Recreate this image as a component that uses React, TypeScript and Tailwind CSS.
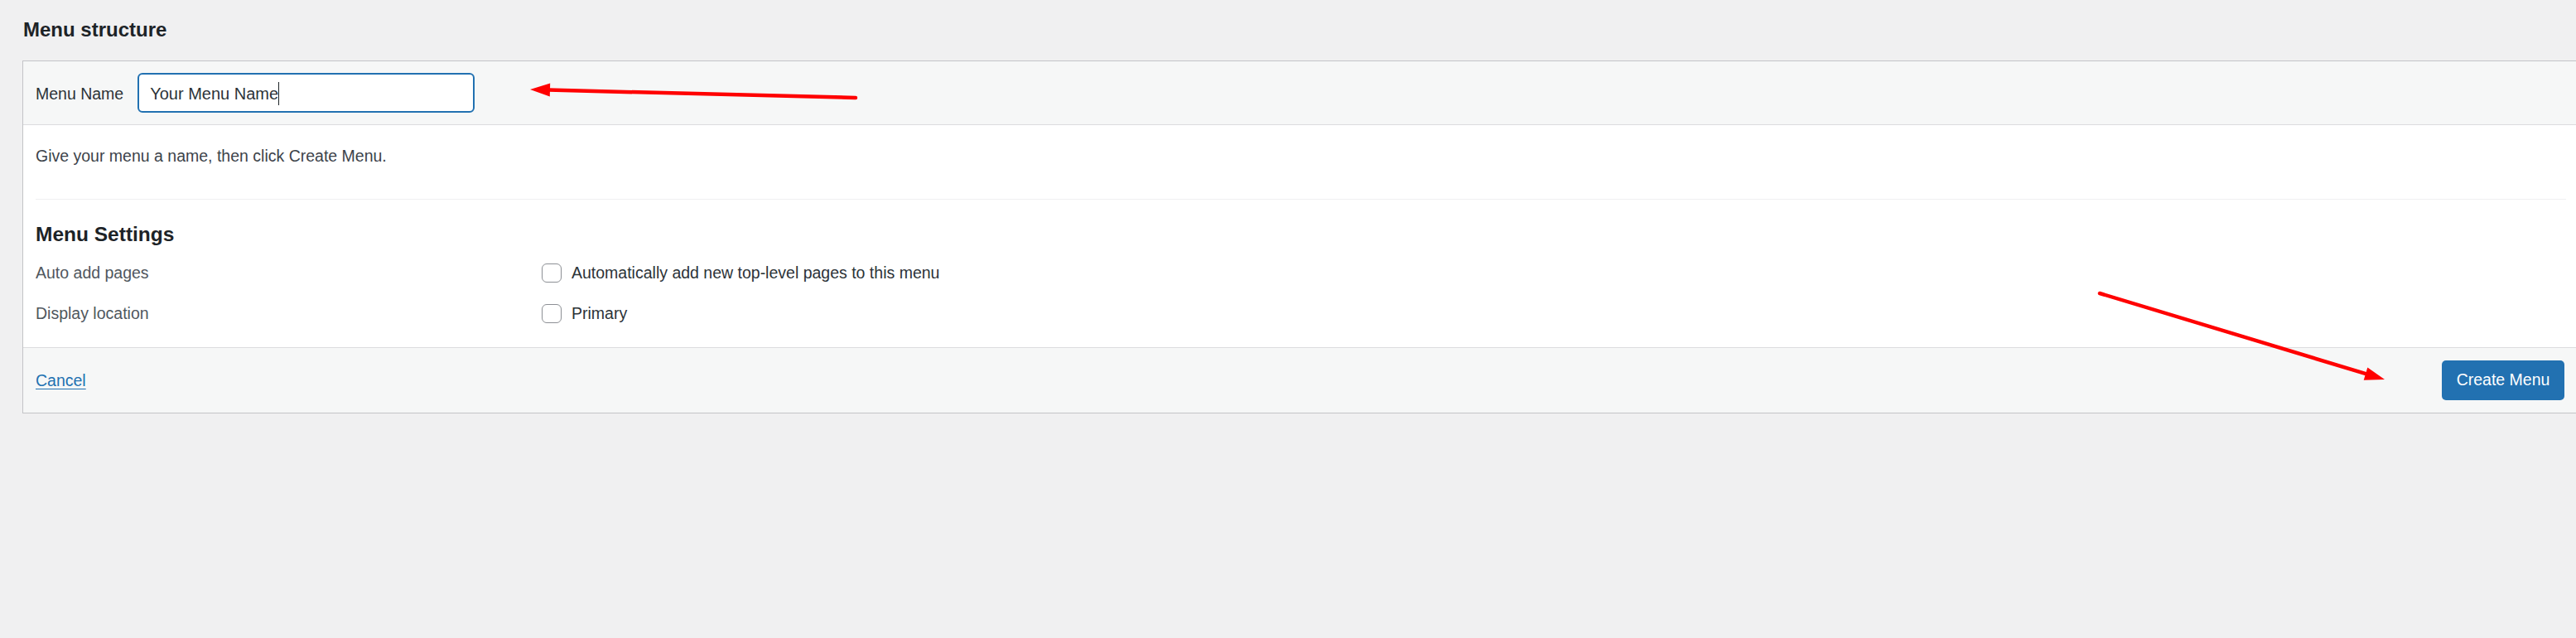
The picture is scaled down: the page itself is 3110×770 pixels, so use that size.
import React from 'react';

const settings = [
  { label: 'Auto add pages', option: 'Automatically add new top-level pages to this menu' },
  { label: 'Display location', option: 'Primary' },
];

function Arrow({ x1, y1, x2, y2 }: { x1: number; y1: number; x2: number; y2: number }) {
  // line from tail (x1,y1) to tip (x2,y2), filled triangle head
  const dx = x2 - x1;
  const dy = y2 - y1;
  const len = Math.hypot(dx, dy);
  const ux = dx / len;
  const uy = dy / len;
  const headLen = 24;
  const half = 8;
  const bx = x2 - ux * headLen;
  const by = y2 - uy * headLen;
  const p1 = `${bx - uy * half},${by + ux * half}`;
  const p2 = `${bx + uy * half},${by - ux * half}`;
  return (
    <g>
      <line x1={x1} y1={y1} x2={bx + ux * 2} y2={by + uy * 2} stroke="#ff0000" strokeWidth={4.5} strokeLinecap="round" />
      <polygon points={`${x2},${y2} ${p1} ${p2}`} fill="#ff0000" />
    </g>
  );
}

export default function App() {
  return (
    <div className="relative w-[3110px] h-[770px] overflow-hidden bg-[#f0f0f1] font-['Liberation_Sans',Arial,sans-serif] text-[#3c434a]">
      <h2 className="pl-[28px] pt-[20px] h-[73px] text-[24px] leading-[32px] font-semibold text-[#1d2327]">
        Menu structure
      </h2>

      {/* Panel runs past the right edge of the window */}
      <div className="ml-[27px] w-[3085px] border border-[#c3c4c7] bg-white">
        <div className="flex items-center h-[77px] px-[15px] bg-[#f6f7f7] border-b border-[#dcdcde]">
          <label className="pt-[3px] text-[19.5px] text-[#2c3338] mr-[17px]">Menu Name</label>
          <div className="flex items-center w-[407px] h-[48px] rounded-[6px] border-2 border-[#2271b1] bg-white pl-[13px] pt-[2px] text-[20px] text-[#2c3338]">
            <span>Your Menu Name</span>
            <span className="w-px h-[28px] bg-[#1d2327]" />
          </div>
        </div>

        <div className="px-[15px] pt-[23px] pb-[27px]">
          <p className="text-[19.5px] leading-[28px] text-[#3c434a]">
            Give your menu a name, then click Create Menu.
          </p>
          <div className="mt-[38px] mr-[-2px] border-t border-[#f0f0f1]" />
          <h3 className="mt-[26px] text-[24.5px] leading-[32px] font-semibold text-[#1d2327]">Menu Settings</h3>
          <div className="mt-[16px] flex flex-col gap-[21px]">
            {settings.map((s) => (
              <div key={s.label} className="flex items-center h-[28px]">
                <span className="w-[611px] pt-[2px] text-[19.5px] text-[#50575e]">{s.label}</span>
                <span className="w-[24px] h-[23px] rounded-[6px] border-[1.5px] border-[#8c8f94] bg-white" />
                <span className="ml-[12px] pt-[2px] text-[19.5px] text-[#2c3338]">{s.option}</span>
              </div>
            ))}
          </div>
        </div>

        <div className="flex items-center justify-between h-[79px] px-[15px] bg-[#f6f7f7] border-t border-[#dcdcde]">
          <a className="pt-[2px] text-[19.5px] text-[#2271b1] underline underline-offset-[3px]">Cancel</a>
          <button className="h-[48px] w-[148px] rounded-[5px] bg-[#2271b1] text-white text-[19.5px]">
            Create Menu
          </button>
        </div>
      </div>

      <svg className="absolute left-0 top-0 pointer-events-none" width={3110} height={770}>
        <Arrow x1={1033} y1={118} x2={640} y2={108} />
        <Arrow x1={2535} y1={354} x2={2879} y2={458} />
      </svg>
    </div>
  );
}
